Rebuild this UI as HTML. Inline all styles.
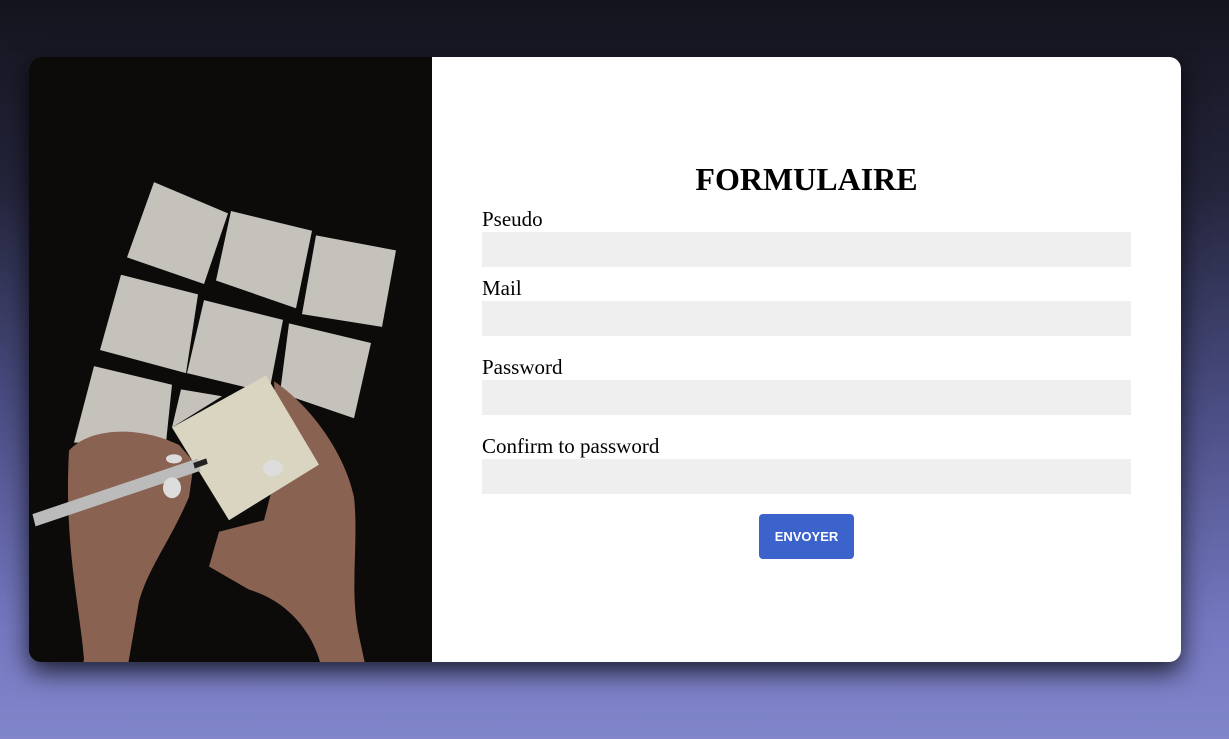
<!DOCTYPE html>
<html><head><meta charset="utf-8"><style>
*{margin:0;padding:0;box-sizing:border-box}
body{width:1229px;height:739px;overflow:hidden;background:linear-gradient(180deg,#14141e 0%,#23243a 25%,#4a4d82 55%,#7478c0 85%,#8186cb 100%);font-family:"Liberation Serif",serif;position:relative}
.card{position:absolute;left:29px;top:57px;width:1152px;height:605px;background:#fff;border-radius:12px;overflow:hidden;box-shadow:0 10px 25px rgba(0,0,0,.75)}
.img{position:absolute;left:0;top:0;width:403px;height:605px;background:#0b0a09}
h1{position:absolute;left:403px;width:749px;top:104px;text-align:center;font-size:32px;font-weight:bold;color:#000}
.lab{position:absolute;left:453px;font-size:21px;color:#000}
.in{position:absolute;left:453px;width:649px;height:35px;background:#efefef}
.btn{position:absolute;left:730px;top:457px;width:95px;height:45px;background:#3c62cc;border-radius:4px;color:#fff;font-family:"Liberation Sans",sans-serif;font-weight:bold;font-size:13px;text-align:center;line-height:45px}
</style></head><body>
<div class="card">
<div class="img"><svg width="403" height="605" viewBox="0 0 403 605">
<rect width="403" height="605" fill="#0c0b0a"/>
<g transform="scale(1,1.158)">
<g fill="#c4c2bb">
<polygon points="125,108 199,135 175,196 98,173"/>
<polygon points="202,133 283,150 267,217 187,193"/>
<polygon points="287,154 367,167 353,233 273,222"/>
<polygon points="92,188 169,205 157,273 71,253"/>
<polygon points="175,210 254,227 240,290 158,273"/>
<polygon points="260,230 342,247 325,312 251,290"/>
<polygon points="65,267 143,283 137,333 45,333"/>
<polygon points="152,287 193,293 143,320"/>
</g>
<g fill="#8a6252">
<path d="M40,340 C60,320 110,318 150,335 L165,350 L160,380 C140,420 120,440 110,470 L95,545 L80,605 L35,605 L55,520 C50,470 35,420 40,340Z"/>
<path d="M245,280 C280,300 315,340 325,380 C330,420 320,460 330,500 L345,560 L370,605 L300,605 L295,540 C290,500 260,470 220,460 L180,440 L190,410 L235,400 L250,350Z"/>
</g>
<polygon points="143,320 237,275 290,352 200,400" fill="#d9d5c0"/>
<line x1="5" y1="400" x2="170" y2="352" stroke="#bbb" stroke-width="11"/>
<line x1="165" y1="353" x2="178" y2="349" stroke="#222" stroke-width="5"/>
<ellipse cx="143" cy="372" rx="9" ry="9" fill="#ddd"/>
<ellipse cx="244" cy="355" rx="10" ry="7" fill="#ddd"/>
<ellipse cx="145" cy="347" rx="8" ry="4" fill="#ddd"/>
</g>
</svg></div>
<h1>FORMULAIRE</h1>
<div class="lab" style="top:150px">Pseudo</div>
<div class="in" style="top:175px"></div>
<div class="lab" style="top:219px">Mail</div>
<div class="in" style="top:244px"></div>
<div class="lab" style="top:298px">Password</div>
<div class="in" style="top:323px"></div>
<div class="lab" style="top:377px">Confirm to password</div>
<div class="in" style="top:402px"></div>
<div class="btn">ENVOYER</div>
</div>
</body></html>
